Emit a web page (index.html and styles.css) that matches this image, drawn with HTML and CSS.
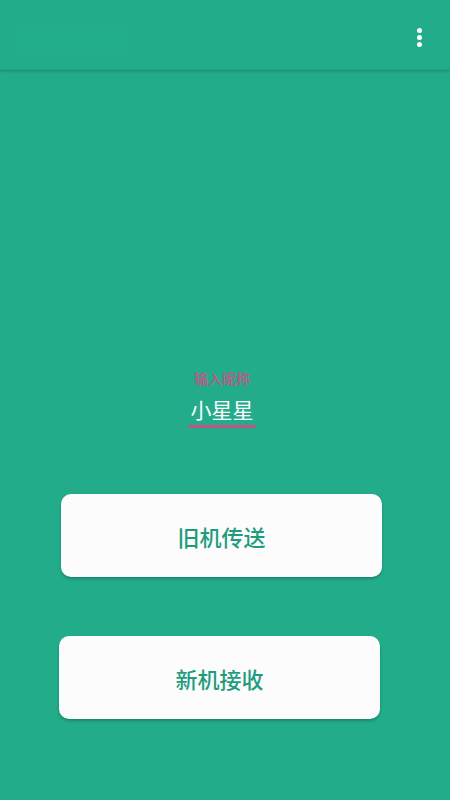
FILE: index.html
```html
<!DOCTYPE html>
<html lang="zh">
<head>
<meta charset="utf-8">
<title>换机</title>
<link rel="stylesheet" href="styles.css">
</head>
<body>
<div class="app">
  <header class="toolbar">
    <div class="title-block"></div>
    <div class="menu">
      <span class="dot"></span><span class="dot"></span><span class="dot"></span>
    </div>
  </header>
  <main class="content">
    <div class="field">
      <div class="hint">输入昵称</div>
      <div class="name">小星星</div>
      <div class="underline"></div>
    </div>
    <div class="actions">
      <button class="btn btn-old">旧机传送</button>
      <button class="btn btn-new">新机接收</button>
    </div>
  </main>
</div>
</body>
</html>
```
FILE: styles.css
```css
html, body {
  margin: 0;
  padding: 0;
}
body {
  background: #22ac8a;
  font-family: "Noto Sans CJK SC", "Noto Sans", sans-serif;
}
.app {
  width: 450px;
  height: 800px;
  background: #22ac8a;
  overflow: hidden;
}
.toolbar {
  height: 69px;
  display: flex;
  align-items: flex-start;
  justify-content: space-between;
  box-shadow: 0 1px 2px rgba(0, 0, 0, 0.12), 0 2px 4px rgba(0, 0, 0, 0.06);
  border-bottom: 1px solid #1fa382;
  position: relative;
}
.title-block {
  margin: 22px 0 0 15px;
  width: 112px;
  height: 30px;
  background: #23ae8b;
}
.menu {
  margin: 28px 28px 0 0;
  display: flex;
  flex-direction: column;
  gap: 2px;
}
.dot {
  width: 5px;
  height: 5px;
  border-radius: 50%;
  background: #ffffff;
}
.content {
  display: flex;
  flex-direction: column;
  align-items: center;
}
.field {
  margin-top: 299px;
  display: flex;
  flex-direction: column;
  align-items: center;
  margin-left: -6px;
}
.hint {
  font-size: 14px;
  line-height: 18px;
  font-weight: 500;
  color: #c25582;
}
.name {
  margin-top: 10px;
  font-size: 21px;
  line-height: 24px;
  color: #ffffff;
}
.underline {
  margin-top: 4px;
  width: 68px;
  height: 3px;
  border-radius: 2px;
  background: #c25582;
}
.actions {
  align-self: flex-start;
  margin: 66px 0 0 61px;
  display: flex;
  flex-direction: column;
  gap: 59px;
}
.btn {
  width: 321px;
  height: 83px;
  border: none;
  border-radius: 10px;
  background: #fcfcfc;
  color: #1e9c7d;
  font-family: "Noto Sans CJK SC", "Noto Sans", sans-serif;
  font-size: 22px;
  font-weight: 500;
  box-shadow: 0 2px 3px rgba(0, 0, 0, 0.22);
  padding: 0;
}
.btn-new {
  margin-left: -2px;
}
```
